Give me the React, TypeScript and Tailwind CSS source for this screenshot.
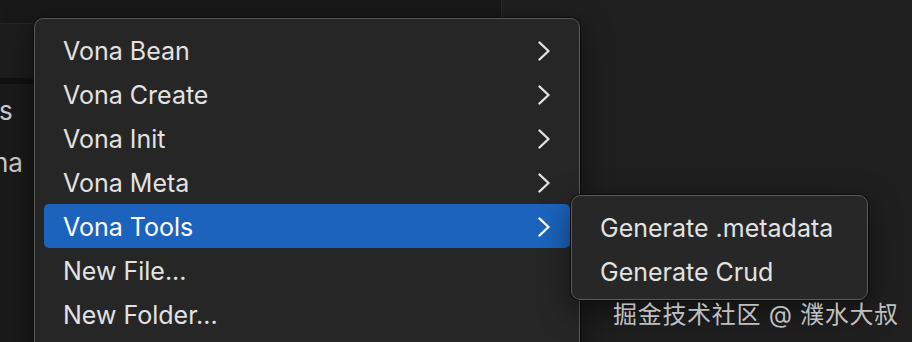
const mainItems = [
  { label: "Vona Bean", sub: true },
  { label: "Vona Create", sub: true },
  { label: "Vona Init", sub: true },
  { label: "Vona Meta", sub: true },
  { label: "Vona Tools", sub: true, active: true },
  { label: "New File...", sub: false },
  { label: "New Folder...", sub: false },
];

const toolItems = ["Generate .metadata", "Generate Crud"];

const Chevron = () => (
  <svg width="14" height="20" viewBox="0 0 14 20" fill="none" className="translate-y-[1px]">
    <polyline
      points="2.5,1.5 11.5,10 2.5,18.5"
      stroke="currentColor"
      strokeWidth="2.4"
      strokeLinecap="round"
      strokeLinejoin="round"
    />
  </svg>
);

const MenuRow = (props: { label: string; sub?: boolean; active?: boolean }) => (
  <div
    className={`flex items-center justify-between h-[44px] pl-[19px] pr-[19px] rounded-[5px] ${
      props.active ? "bg-[#1b63bc] text-white" : "text-[#e2e2e2]"
    }`}
  >
    <span className="whitespace-nowrap translate-y-[1px]">{props.label}</span>
    {props.sub && <Chevron />}
  </div>
);

export default function App() {
  return (
    <div
      className="relative w-[912px] h-[342px] overflow-hidden bg-[#1f1f1f] text-[25px] leading-none"
      style={{ fontFamily: '"Inter", "Noto Sans CJK SC", sans-serif' }}
    >
      {/* background: editor chrome */}
      <div className="flex h-full">
        <div className="w-[502px] h-full flex flex-col bg-[#181818] border-r border-[#2a2a2a]">
          <div className="h-[24px] border-b border-[#262626]" />
          <div className="h-[54px] bg-[#1c1c1c]" />
          <div className="h-[6px] bg-[#111111]" />
          <div className="flex-1 bg-[#1a1a1a] text-[#cccccc] text-[26px] pt-[1px]">
            <div className="h-[52px] flex items-center -ml-[1px]">s</div>
            <div className="h-[52px] flex items-center -ml-[7px]">na</div>
          </div>
        </div>
        <div className="flex-1 bg-[#1f1f1f]" />
      </div>

      {/* context menu */}
      <div className="absolute left-[34px] top-[18px] w-[546px] h-[360px] rounded-[9px] border border-[#5a5a5a] bg-[#262626] shadow-[0_0_0_1px_#0c0c0c,0_10px_30px_rgba(0,0,0,0.5)] px-[9px] pt-[9px]">
        {mainItems.map((it) => (
          <MenuRow key={it.label} label={it.label} sub={it.sub} active={it.active} />
        ))}
      </div>

      {/* submenu */}
      <div className="absolute left-[571px] top-[195px] w-[297px] rounded-[9px] border border-[#5a5a5a] bg-[#272727] shadow-[0_0_0_1px_#0c0c0c,0_10px_30px_rgba(0,0,0,0.5)] px-[9px] pt-[9px] pb-[6px]">
        {toolItems.map((t) => (
          <MenuRow key={t} label={t} />
        ))}
      </div>

      {/* watermark */}
      <div className="absolute left-[613px] top-[301px] text-[24px] tracking-[0.7px] leading-[28px] text-[#d6d6d6]/90 whitespace-nowrap">
        掘金技术社区 @ 濮水大叔
      </div>
    </div>
  );
}
